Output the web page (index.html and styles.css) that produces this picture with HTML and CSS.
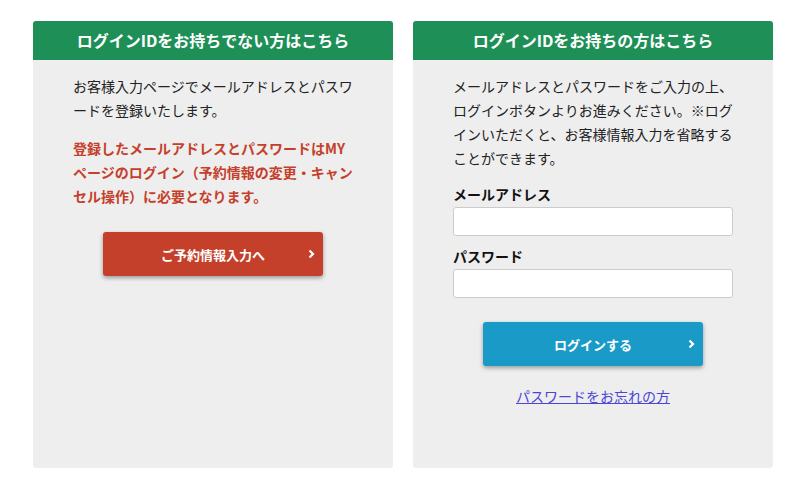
FILE: index.html
```html
<!DOCTYPE html>
<html lang="ja">
<head>
<meta charset="utf-8">
<link rel="stylesheet" href="styles.css">
</head>
<body>
<div class="wrap">
  <section class="card">
    <h2 class="card-head">ログインIDをお持ちでない方はこちら</h2>
    <div class="card-body">
      <p class="txt">お客様入力ページでメールアドレスとパスワードを登録いたします。</p>
      <p class="txt warn">登録したメールアドレスとパスワードはMYページのログイン（予約情報の変更・キャンセル操作）に必要となります。</p>
      <div class="btn-row">
        <a class="btn btn-red" href="#">ご予約情報入力へ<svg class="chev" width="7" height="10" viewBox="0 0 7 10"><path d="M1.5 1.5 L5 5 L1.5 8.5" fill="none" stroke="#fff" stroke-width="2.2"/></svg></a>
      </div>
    </div>
  </section>
  <section class="card">
    <h2 class="card-head">ログインIDをお持ちの方はこちら</h2>
    <div class="card-body">
      <p class="txt">メールアドレスとパスワードをご入力の上、ログインボタンよりお進みください。※ログインいただくと、お客様情報入力を省略することができます。</p>
      <label class="lbl">メールアドレス</label>
      <input class="inp" type="text">
      <label class="lbl lbl2">パスワード</label>
      <input class="inp" type="password">
      <div class="btn-row btn-row2">
        <a class="btn btn-blue" href="#">ログインする<svg class="chev" width="7" height="10" viewBox="0 0 7 10"><path d="M1.5 1.5 L5 5 L1.5 8.5" fill="none" stroke="#fff" stroke-width="2.2"/></svg></a>
      </div>
      <div class="link-row"><a class="forgot" href="#">パスワードをお忘れの方</a></div>
    </div>
  </section>
</div>
</body>
</html>
```
FILE: styles.css
```css
* { box-sizing: border-box; }
html, body { margin: 0; padding: 0; background: #fff; }
body {
  font-family: "Noto Sans CJK JP", "Noto Sans", sans-serif;
  color: #222;
}
.wrap {
  display: flex;
  gap: 20px;
  padding: 21px 0 0 33px;
}
.card {
  width: 360px;
  height: 447px;
  background: #eeeeee;
  border-radius: 3px;
  overflow: hidden;
}
.card-head {
  margin: 0;
  height: 39px;
  background: #1e8f56;
  color: #fff;
  font-size: 16px;
  font-weight: bold;
  line-height: 39px;
  text-align: center;
}
.card-body {
  padding: 14px 40px 0;
}
.txt {
  margin: 0;
  font-size: 14px;
  line-height: 24px;
  color: #222;
}
.warn {
  margin-top: 14px;
  color: #c5402a;
  font-weight: bold;
}
.btn-row {
  display: flex;
  justify-content: center;
  margin-top: 24px;
}
.btn {
  position: relative;
  display: flex;
  align-items: center;
  justify-content: center;
  width: 220px;
  height: 44px;
  border-radius: 3px;
  color: #fff;
  font-size: 13px;
  font-weight: bold;
  text-decoration: none;
  box-shadow: 0 2px 4px rgba(0,0,0,0.35);
}
.btn-red { background: #c5402a; }
.btn-blue { background: #1a9ac6; }
.chev {
  position: absolute;
  right: 8px;
  top: 17px;
}
.lbl {
  display: block;
  margin-top: 15px;
  font-size: 14px;
  font-weight: bold;
  line-height: 18px;
  color: #111;
}
.lbl2 { margin-top: 11px; }
.inp {
  display: block;
  width: 280px;
  height: 29px;
  margin-top: 4px;
  border: 1px solid #ccc;
  border-radius: 3px;
  background: #fff;
  padding: 0 6px;
  font-size: 14px;
}
.btn-row2 { margin-top: 24px; }
.link-row {
  text-align: center;
  margin-top: 19px;
  line-height: 20px;
}
.forgot {
  font-size: 14px;
  color: #4b46d6;
  text-decoration: underline;
}
```
